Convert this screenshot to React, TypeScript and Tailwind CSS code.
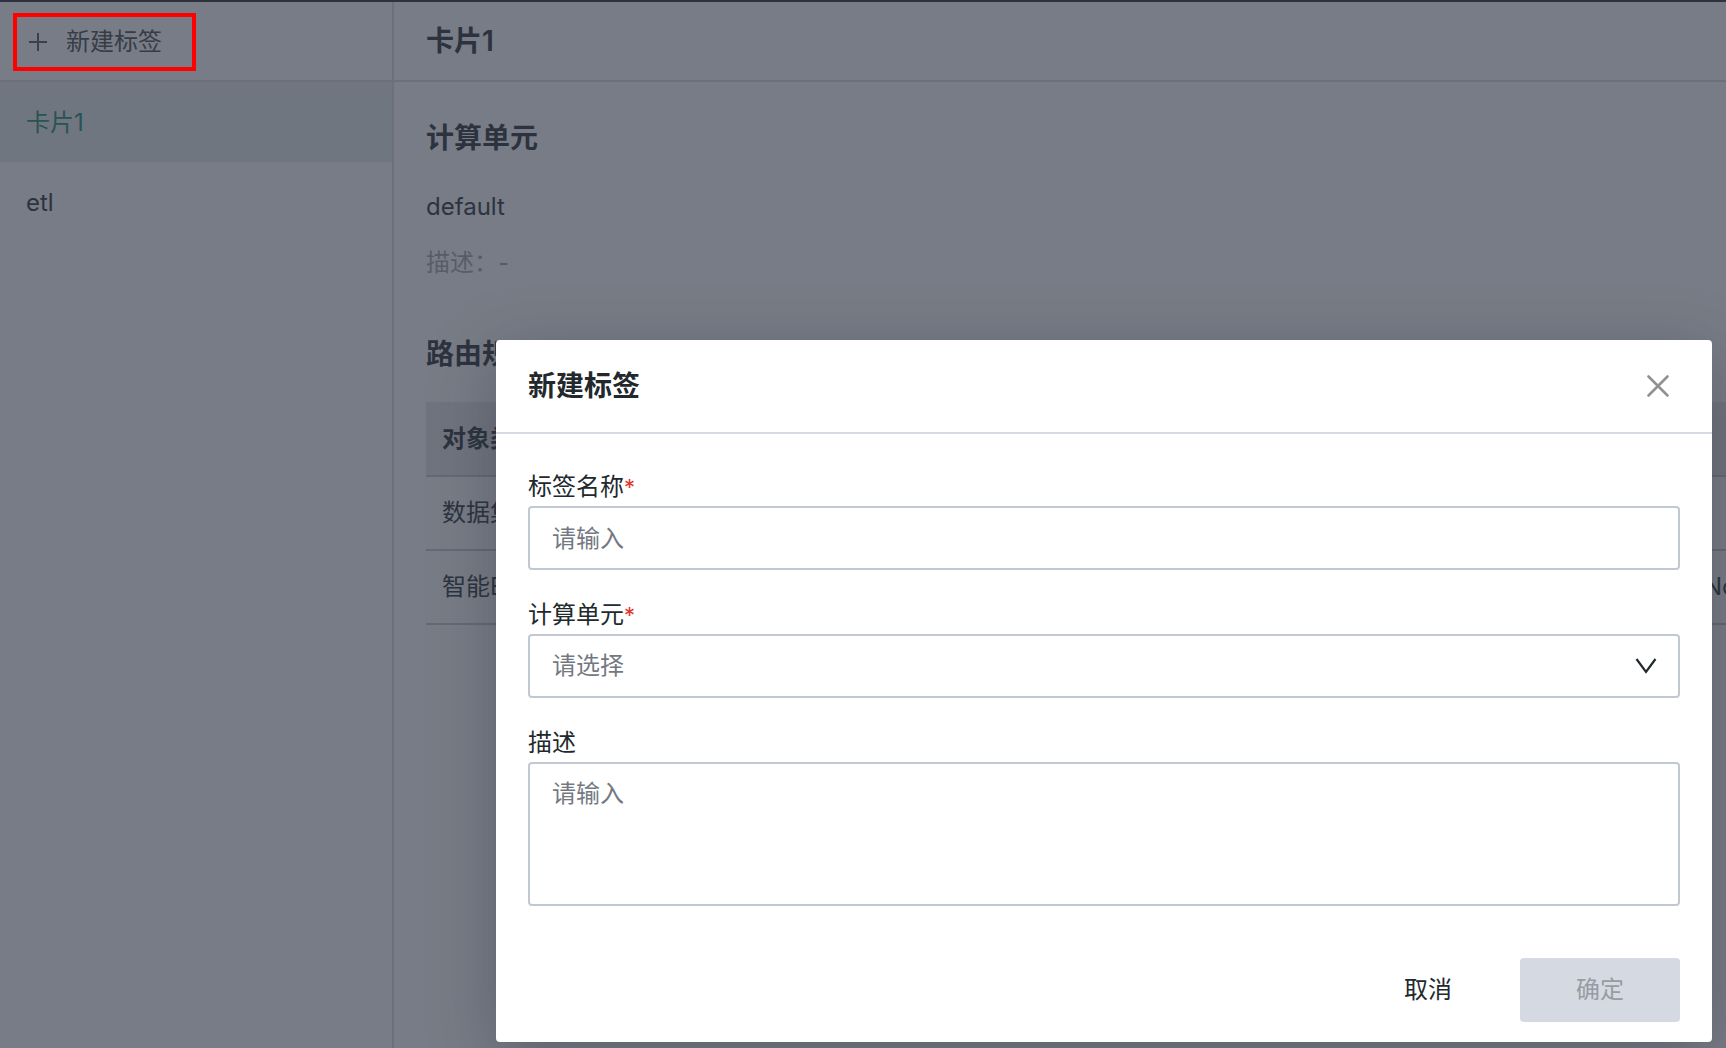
import React from "react";

const routes = [
  { type: "数据集", rule: "", note: "" },
  { type: "智能ETL", rule: "", note: "None" },
];

function Required() {
  return <span className="text-[22px] text-[#e5322d]">*</span>;
}

function Sidebar() {
  return (
    <aside className="flex w-[394px] shrink-0 flex-col border-r-2 border-[#6b707b]">
      <div className="flex h-20 items-center border-b-2 border-[#6b707b] pt-0.5 pl-[13px]">
        <button
          type="button"
          className="flex h-[58px] w-[183px] items-center gap-4 border-4 border-[#ff0000] pl-[11px] text-left"
        >
          <svg className="size-5 shrink-0" viewBox="0 0 20 20" fill="none" stroke="#3b404a" strokeWidth="2">
            <path d="M10 1v18M1 10h18" />
          </svg>
          <span className="ml-0.5 whitespace-nowrap text-[#373c46]">新建标签</span>
        </button>
      </div>
      <nav className="flex flex-col">
        <a href="#card" className="flex h-20 items-center bg-[#6f7680] px-[26px] pt-0.5 text-[#285454]">
          卡片1
        </a>
        <a href="#etl" className="flex h-20 items-center px-[26px] pt-0.5">
          etl
        </a>
      </nav>
    </aside>
  );
}

function Content() {
  return (
    <main className="min-w-0 flex-1 overflow-hidden">
      <header className="flex h-20 items-center border-b-2 border-[#6b707b] px-8">
        <h1 className="text-[28px] leading-10 font-semibold">卡片1</h1>
      </header>
      <div className="pt-9 pl-8">
        <h2 className="text-[28px] leading-10 font-semibold">计算单元</h2>
        <p className="mt-[31px] leading-9">default</p>
        <p className="mt-5 leading-9 text-[#575c66]">描述：-</p>
        <h2 className="mt-[53px] text-[28px] leading-10 font-semibold">路由规则</h2>
        <table className="mt-7 w-[1600px] table-fixed border-collapse text-left">
          <thead>
            <tr className="h-[74px] border-b-2 border-[#646974] bg-[#70747f]">
              <th className="w-[400px] px-4 font-semibold">对象类型</th>
              <th className="w-[862px] px-4" />
              <th className="px-4" />
            </tr>
          </thead>
          <tbody>
            {routes.map((r) => (
              <tr key={r.type} className="h-[74px] border-b-2 border-[#646974]">
                <td className="px-4">{r.type}</td>
                <td className="px-4">{r.rule}</td>
                <td className="px-4">{r.note}</td>
              </tr>
            ))}
          </tbody>
        </table>
      </div>
    </main>
  );
}

function TagDialog() {
  return (
    <div
      role="dialog"
      aria-labelledby="dialog-title"
      className="absolute top-[338px] right-[14px] left-[496px] rounded-[4px] bg-white text-[#22292d] shadow-[0_16px_64px_rgba(40,45,55,0.35)]"
    >
      <header className="flex h-[94px] items-center justify-between border-b-2 border-[#d5d9e0] px-8">
        <h2 id="dialog-title" className="text-[28px] leading-10 font-semibold">
          新建标签
        </h2>
        <button type="button" aria-label="关闭" className="flex size-11 items-center justify-center">
          <svg className="size-6" viewBox="0 0 24 24" fill="none" stroke="#8f9193" strokeWidth="2.6" strokeLinecap="round">
            <path d="M2.5 2.5l19 19M21.5 2.5l-19 19" />
          </svg>
        </button>
      </header>
      <form className="px-8 pt-[34px] pb-5">
        <label htmlFor="tag-name" className="block leading-[38px]">
          标签名称
          <Required />
        </label>
        <input
          id="tag-name"
          type="text"
          placeholder="请输入"
          className="block h-16 w-full rounded-[4px] border-2 border-[#c2c8d1] px-[22px] placeholder:text-[#747981]"
        />
        <label htmlFor="tag-unit" className="mt-[26px] block leading-[38px]">
          计算单元
          <Required />
        </label>
        <div className="relative">
          <select
            id="tag-unit"
            defaultValue=""
            className="block h-16 w-full appearance-none rounded-[4px] border-2 border-[#c2c8d1] bg-white px-[22px] text-[#747981]"
          >
            <option value="">请选择</option>
          </select>
          <svg
            className="pointer-events-none absolute top-5 right-[22px] size-6"
            viewBox="0 0 24 24"
            fill="none"
            stroke="#22292d"
            strokeWidth="2.2"
          >
            <path d="M2.5 5l9.5 13L21.5 5" />
          </svg>
        </div>
        <label htmlFor="tag-desc" className="mt-[26px] block leading-[38px]">
          描述
        </label>
        <textarea
          id="tag-desc"
          placeholder="请输入"
          className="block h-36 w-full resize-none rounded-[4px] border-2 border-[#c2c8d1] px-[22px] py-3 leading-9 placeholder:text-[#747981]"
        />
        <div className="mt-[52px] flex justify-end gap-3">
          <button type="button" className="h-16 w-40 rounded-[4px]">
            取消
          </button>
          <button type="submit" disabled className="h-16 w-40 rounded-[4px] bg-[#d5d9e1] text-[#979ba2]">
            确定
          </button>
        </div>
      </form>
    </div>
  );
}

export default function App() {
  return (
    <div className="relative flex min-h-screen overflow-hidden border-t-2 border-[#2d323d] bg-[#787c86] font-[Inter,'Noto_Sans_CJK_SC',sans-serif] text-2xl text-[#2d333e]">
      <Sidebar />
      <Content />
      <TagDialog />
    </div>
  );
}
